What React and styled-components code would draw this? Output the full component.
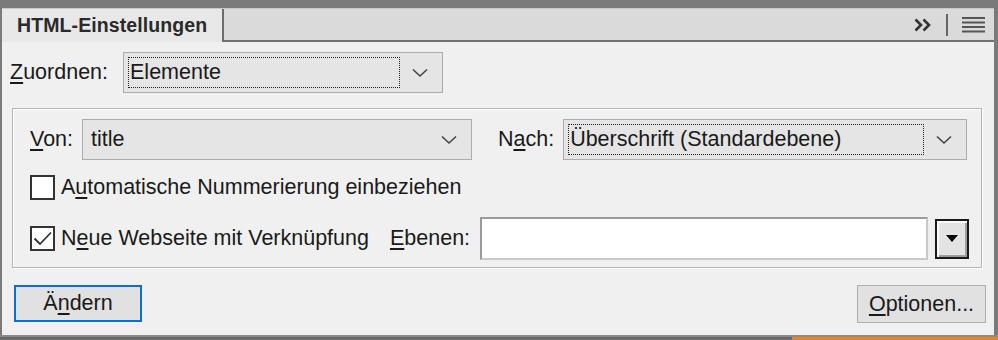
import styled, { createGlobalStyle } from 'styled-components';

const GlobalStyle = createGlobalStyle`
	html, body {
		margin: 0;
		padding: 0;
		background: #7a7a7a;
	}
	body {
		font-family: 'Liberation Sans', Arial, sans-serif;
	}
`;

function Chevron() {
	return (
		<svg width='16' height='10' viewBox='0 0 16 10'>
			<path d='M1 1.5 L8 8 L15 1.5' fill='none' stroke='#444' strokeWidth='1.6' />
		</svg>
	);
}

function App() {
	return (
		<Frame>
			<GlobalStyle />
			<Panel>
				<TabBar>
					<Tab>HTML-Einstellungen</Tab>
					<TabTools>
						<svg width='18' height='14' viewBox='0 0 18 14'>
							<path
								d='M1.5 1.5 L7 7 L1.5 12.5 M9.5 1.5 L15 7 L9.5 12.5'
								fill='none'
								stroke='#333'
								strokeWidth='2.6'
							/>
						</svg>
						<ToolSep />
						<svg width='23' height='16' viewBox='0 0 23 16'>
							<rect x='0' y='0' width='23' height='2' fill='#555' />
							<rect x='0' y='4.5' width='23' height='2' fill='#555' />
							<rect x='0' y='9' width='23' height='2' fill='#555' />
							<rect x='0' y='13.5' width='23' height='2' fill='#555' />
						</svg>
					</TabTools>
				</TabBar>

				<Content>
					<Row>
						<Label>
							<Accel>Z</Accel>uordnen:
						</Label>
						<Select width={320} gap={15}>
							<FocusRing>Elemente</FocusRing>
							<Chevron />
						</Select>
					</Row>

					<Group>
						<Row>
							<Label>
								<Accel>V</Accel>on:
							</Label>
							<Select width={390} gap={9}>
								<SelectText>title</SelectText>
								<Chevron />
							</Select>
							<Label gap={26}>
								N<Accel>a</Accel>ch:
							</Label>
							<Select width={404} gap={9}>
								<FocusRing>Überschrift (Standardebene)</FocusRing>
								<Chevron />
							</Select>
						</Row>

						<CheckRow top={15}>
							<Box />
							<Label gap={6}>
								A<Accel>u</Accel>tomatische Nummerierung einbeziehen
							</Label>
						</CheckRow>

						<CheckRow top={17}>
							<Box>
								<svg width='21' height='17' viewBox='0 0 21 17'>
									<path
										d='M2.5 8.5 L8 14 L19 2.5'
										fill='none'
										stroke='#333'
										strokeWidth='1.8'
									/>
								</svg>
							</Box>
							<Label gap={6}>
								N<Accel>e</Accel>ue Webseite mit Verknüpfung
							</Label>
							<Label gap={21}>
								<Accel>E</Accel>benen:
							</Label>
							<TextInput />
							<DropButton>
								<svg width='12' height='7' viewBox='0 0 12 7'>
									<path d='M0 0 L12 0 L6 7 Z' fill='#000' />
								</svg>
							</DropButton>
						</CheckRow>
					</Group>

					<Footer>
						<Button primary>
							Ä<Accel>n</Accel>dern
						</Button>
						<Button>
							<Accel>O</Accel>ptionen...
						</Button>
					</Footer>
				</Content>
			</Panel>
			<BottomEdge>
				<OrangeStrip />
			</BottomEdge>
		</Frame>
	);
}

export default App;

// ########## styled components ##########
const Frame = styled.div`
	width: 998px;
	height: 340px;
	box-sizing: border-box;
	background: #7a7a7a;
	padding: 8px 4px 0 2px;
	display: flex;
	flex-direction: column;
`;

const Panel = styled.div`
	flex: 1;
	display: flex;
	flex-direction: column;
	background: #f0f0f0;
	color: #1a1a1a;
	font-size: 21.5px;
`;

const TabBar = styled.div`
	height: 34px;
	box-sizing: border-box;
	display: flex;
	align-items: stretch;
	background: #dadada;
	border-bottom: 2px solid #727272;
	border-top: 1px solid #c8c8c8;
`;

const Tab = styled.div`
	width: 222px;
	box-sizing: border-box;
	margin-bottom: -2px;
	padding: 5px 0 0 15px;
	background: #e8e8e8;
	border-right: 2px solid #6c6c6c;
	font-weight: bold;
	font-size: 19.5px;
	color: #2a2a2a;
	letter-spacing: 0.1px;
`;

const TabTools = styled.div`
	margin-left: auto;
	display: flex;
	align-items: center;
	gap: 14px;
	padding-right: 9px;
`;

const ToolSep = styled.div`
	width: 2px;
	height: 22px;
	background: #666;
`;

const Content = styled.div`
	flex: 1;
	display: flex;
	flex-direction: column;
	padding: 10px 12px 0 8px;
`;

const Row = styled.div`
	display: flex;
	align-items: center;
	height: 41px;
`;

const CheckRow = styled.div`
	display: flex;
	align-items: center;
	margin-top: ${(props) => props.top}px;
`;

const Label = styled.span`
	margin-left: ${(props) => props.gap || 0}px;
	white-space: nowrap;
`;

const Accel = styled.u`
	text-decoration-thickness: 1.5px;
	text-underline-offset: 3px;
`;

const Select = styled.div`
	width: ${(props) => props.width}px;
	height: 41px;
	margin-left: ${(props) => props.gap}px;
	box-sizing: border-box;
	display: flex;
	align-items: center;
	justify-content: space-between;
	padding: 4px 14px 4px 4px;
	background: #e5e5e5;
	border: 1px solid #acacac;
`;

const FocusRing = styled.span`
	flex: 1;
	height: 100%;
	box-sizing: border-box;
	display: flex;
	align-items: center;
	padding-left: 1px;
	margin-right: 12px;
	border: 1.5px dotted #222;
`;

const SelectText = styled.span`
	flex: 1;
	padding-left: 4px;
`;

const Group = styled.div`
	margin-top: 15px;
	margin-left: 2px;
	height: 160px;
	box-sizing: border-box;
	padding: 10px 14px 0 17px;
	border: 1px solid #b5b5b5;
	box-shadow: inset 1px 1px 0 #fff, 1px 1px 0 #fff;
`;

const Box = styled.div`
	width: 25px;
	height: 25px;
	box-sizing: border-box;
	border: 2px solid #333;
	background: #fff;
	display: flex;
	align-items: center;
	justify-content: center;
`;

const TextInput = styled.div`
	flex: 1;
	height: 43px;
	margin-left: 10px;
	box-sizing: border-box;
	background: #fff;
	border: 2px solid #9a9a9a;
	border-right-color: #c9c9c9;
	border-bottom-color: #c9c9c9;
`;

const DropButton = styled.div`
	width: 34px;
	height: 40px;
	margin-left: 7px;
	margin-right: -2px;
	box-sizing: border-box;
	display: flex;
	align-items: center;
	justify-content: center;
	background: #e3e3e3;
	border: 2px solid #1a1a1a;
	box-shadow: inset 2px 2px 0 #fafafa, inset -2px -2px 0 #9d9d9d;
`;

const Footer = styled.div`
	display: flex;
	justify-content: space-between;
	align-items: flex-start;
	margin-top: 17px;
	padding: 0 0 0 4px;
`;

const Button = styled.div`
	width: ${(props) => (props.primary ? 128 : 129)}px;
	height: ${(props) => (props.primary ? 37 : 38)}px;
	box-sizing: border-box;
	display: flex;
	align-items: center;
	justify-content: center;
	background: #e1e1e1;
	border: ${(props) =>
		props.primary ? '2px solid #0a6fd4' : '1px solid #adadad'};
	margin-right: ${(props) => (props.primary ? 0 : -4)}px;
`;

const BottomEdge = styled.div`
	height: 5px;
	margin: 0 -4px 0 -2px;
	display: flex;
	justify-content: flex-end;
	align-items: flex-end;
	background: #6a6a6a;
	border-top: 2px solid #8a8a8a;
	box-sizing: border-box;
`;

const OrangeStrip = styled.div`
	width: 206px;
	height: 3px;
	background: #e8801e;
`;
